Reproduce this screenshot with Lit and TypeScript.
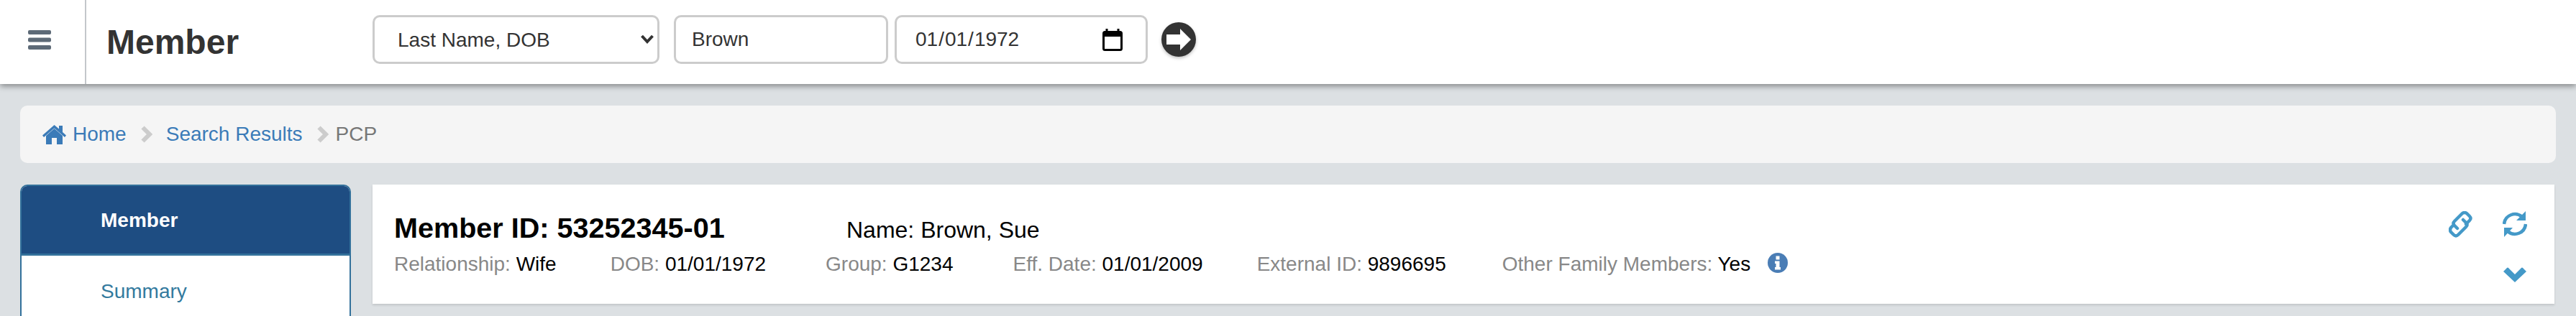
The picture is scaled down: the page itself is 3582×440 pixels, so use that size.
import { LitElement, html, css, svg } from "lit";
import { customElement } from "lit/decorators.js";

const facts = [
  { l: "Relationship:", v: "Wife", gap: 0 },
  { l: "DOB:", v: "01/01/1972", gap: 75 },
  { l: "Group:", v: "G1234", gap: 83 },
  { l: "Eff. Date:", v: "01/01/2009", gap: 83 },
  { l: "External ID:", v: "9896695", gap: 75 },
  { l: "Other Family Members:", v: "Yes", gap: 78 },
];

const chevron = svg`<path d="M3.5 3.5 L13 13 L3.5 22.5" fill="none" stroke="#ccc" stroke-width="6" />`;

@customElement("app-root")
export class AppRoot extends LitElement {
  static styles = css`
    :host { display: block; width: 3582px; height: 440px; overflow: hidden; background: #dce0e3; font-family: "Liberation Sans", Arial, sans-serif; font-size: 28px; color: #333; }
    * { box-sizing: border-box; }
    .top { height: 117px; background: #fff; display: flex; box-shadow: 0 3px 8px rgba(0,0,0,.4); position: relative; }
    .burger { width: 120px; border-right: 2px solid #c3c7ca; display: flex; align-items: center; justify-content: center; padding-right: 8px; padding-bottom: 6px; }
    .title { width: 398px; padding-left: 28px; font-size: 48px; font-weight: bold; color: #333; line-height: 117px; }
    .search { display: flex; align-items: flex-start; padding-top: 21px; }
    .field { height: 68px; border: 3px solid #ccc; border-radius: 10px; background: #fff; font: 28px "Liberation Sans", Arial, sans-serif; color: #333; outline: none; padding: 0 32px; }
    .selwrap { position: relative; width: 399px; height: 68px; margin-right: 20px; }
    select.field { appearance: none; width: 100%; }
    .selwrap svg { position: absolute; right: 8px; top: 27px; }
    .name { width: 298px; margin-right: 9px; padding: 0 22px; }
    .datewrap { position: relative; width: 352px; height: 68px; margin-right: 19px; }
    .date { width: 100%; height: 100%; padding: 0 25px; }
    .date::-webkit-calendar-picker-indicator { width: 30px; height: 32px; padding: 0; margin: 0 -2px 0 0; opacity: 0; }
    .datewrap svg { position: absolute; right: 35px; top: 19px; pointer-events: none; }
    .go { margin-top: 10px; width: 48px; height: 48px; filter: blur(.7px) drop-shadow(0 2px 2px rgba(0,0,0,.25)); }
    .crumbs { margin: 30px 28px 0; height: 80px; background: #f5f5f5; border-radius: 10px; display: flex; align-items: center; padding: 0 0 0 31px; }
    .crumbs a { color: #3b7bb8; text-decoration: none; }
    .crumbs .cur { color: #777; }
    .home { margin-right: 9px; }
    .sep { margin: 0 19px; }
    .sep2 { margin: 0 10px 0 19px; }
    .main { display: flex; gap: 30px; margin: 30px 30px 0 28px; align-items: flex-start; }
    .side { width: 460px; height: 400px; flex: none; background: #fff; border: 2px solid #33719b; border-radius: 10px 10px 0 0; overflow: hidden; }
    .side .on { height: 99px; background: #1e4d82; border-bottom: 3px solid #33719b; color: #fff; font-weight: bold; padding: 34px 0 0 110px; line-height: 32px; margin-top: -2px; }
    .side .off { color: #337a9e; padding: 34px 0 0 110px; line-height: 32px; }
    .card { flex: 1; height: 166px; background: #fff; box-shadow: 0 2px 3px rgba(0,0,0,.12); display: flex; justify-content: space-between; padding: 0 30px 0 30px; }
    .head { display: flex; align-items: baseline; padding-top: 37px; line-height: 46px; }
    .id { font-size: 39.6px; font-weight: bold; color: #000; width: 629px; }
    .nm { font-size: 32px; color: #000; }
    .row { display: flex; align-items: center; margin-top: 7px; line-height: 36px; }
    .row .l { color: #888; }
    .row .v { color: #000; }
    .info { margin-left: 24px; margin-top: -4px; }
    .tools { display: grid; grid-template-columns: auto auto; column-gap: 42px; row-gap: 41px; justify-items: center; align-content: start; padding-top: 37px; padding-right: 8px; }
  `;

  render() {
    return html`
      <div class="top">
        <div class="burger">
          <svg width="32" height="27" viewBox="0 0 32 27" fill="#5d6a77"><rect width="32" height="6" rx="2"/><rect y="10.5" width="32" height="6" rx="2"/><rect y="21" width="32" height="6" rx="2"/></svg>
        </div>
        <div class="title">Member</div>
        <div class="search">
          <div class="selwrap">
            <select class="field"><option>Last Name, DOB</option></select>
            <svg width="18" height="13" viewBox="0 0 18 13" fill="none" stroke="#333" stroke-width="4"><path d="M1.5 2 L9 10 L16.5 2"/></svg>
          </div>
          <input class="field name" .value=${"Brown"} />
          <div class="datewrap">
            <input class="field date" type="date" .value=${"1972-01-01"} />
            <svg width="28" height="31" viewBox="0 0 28 31" fill="none" stroke="#000"><path d="M6 0 V6 M22 0 V6" stroke-width="3"/><rect x="1.5" y="4.5" width="25" height="25" rx="2" stroke-width="3"/><rect x="1" y="4" width="26" height="7" fill="#000" stroke="none"/></svg>
          </div>
          <svg class="go" viewBox="0 0 48 48"><circle cx="24" cy="24" r="24" fill="#333"/><path d="M26 9 L41 24 L26 39 L26 31 L7 31 L7 17 L26 17 Z" fill="#fff"/></svg>
        </div>
      </div>
      <div class="crumbs">
        <svg class="home" width="33" height="27" viewBox="0 0 33 27" fill="#3b7bb8"><path d="M16.5 5 L5 15 V27 H13 V18 H20 V27 H28 V15 Z"/><path d="M16.5 0 L0 14.5 L2 17 L16.5 4.5 L31 17 L33 14.5 L28 10 V1 H23 V5.5 Z"/></svg>
        <a>Home</a>
        <svg class="sep" width="17" height="26" viewBox="0 0 17 26">${chevron}</svg>
        <a>Search Results</a>
        <svg class="sep2" width="17" height="26" viewBox="0 0 17 26">${chevron}</svg>
        <span class="cur">PCP</span>
      </div>
      <div class="main">
        <div class="side">
          <div class="on">Member</div>
          <div class="off">Summary</div>
        </div>
        <div class="card">
          <div>
            <div class="head"><div class="id">Member ID: 53252345-01</div><div class="nm">Name: Brown, Sue</div></div>
            <div class="row">
              ${facts.map(f => html`<span style="margin-left:${f.gap}px"><span class="l">${f.l}</span> <span class="v">${f.v}</span></span>`)}
              <svg class="info" width="28" height="28" viewBox="0 0 28 28"><circle cx="14" cy="14" r="14" fill="#4a7db5"/><rect x="11.5" y="4.5" width="5" height="5" fill="#fff"/><path d="M10 11.5 H16.5 V20 H18 V23.5 H10 V20 H11.5 V15 H10 Z" fill="#fff"/></svg>
            </div>
          </div>
          <div class="tools">
            <svg width="33" height="37" viewBox="6 6 33 37" fill="none" stroke="#4499c8" stroke-width="4.5" stroke-linecap="round" stroke-linejoin="round"><path d="M18 30 L14 26 Q11 23 14 20 L25 9 Q28 7 31 9 L35 13 Q38 16 35 19 L30 24"/><path d="M11 27 L9 29 Q7 32 9 35 L13 39 Q16 42 19 39 L30 28 Q33 25 30 22 L26 18"/></svg>
            <svg width="34" height="36" viewBox="0 0 34 36"><g fill="none" stroke="#4499c8" stroke-width="4.5"><path d="M2 18 A15 15 0 0 1 27 8"/><path d="M32 18 A15 15 0 0 1 7 28"/></g><path d="M32 0 V13 H19 Z M2 36 V23 H14 Z" fill="#4499c8"/></svg>
            <span></span>
            <svg width="32" height="21" viewBox="0 0 32 21" fill="#4499c8"><path d="M0 6 L5 1 Q6 0 7 1 L16 10 L25 1 Q26 0 27 1 L32 6 L16 21 Z"/></svg>
          </div>
        </div>
      </div>
    `;
  }
}
